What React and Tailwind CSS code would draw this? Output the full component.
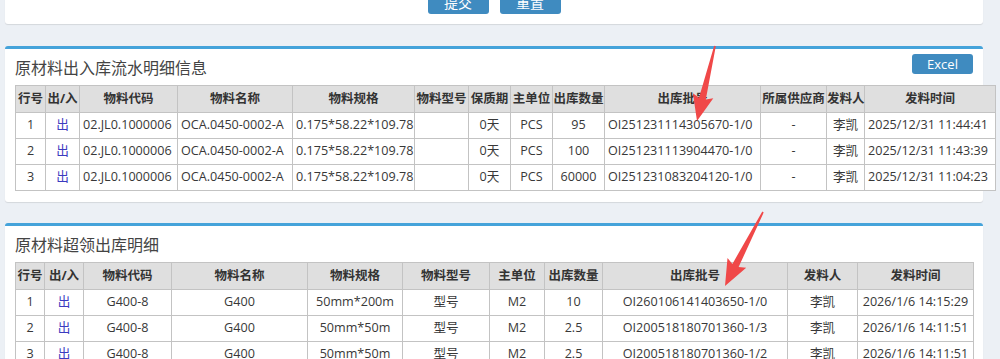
import React from "react";

const t1Cols = [
  { h: "行号", w: 30, a: "c" },
  { h: "出/入", w: 34, a: "c" },
  { h: "物料代码", w: 98, a: "l" },
  { h: "物料名称", w: 115, a: "l" },
  { h: "物料规格", w: 122, a: "l" },
  { h: "物料型号", w: 54, a: "c" },
  { h: "保质期", w: 42, a: "c" },
  { h: "主单位", w: 42, a: "c" },
  { h: "出库数量", w: 52, a: "c" },
  { h: "出库批号", w: 156, a: "l" },
  { h: "所属供应商", w: 66, a: "c" },
  { h: "发料人", w: 38, a: "c" },
  { h: "发料时间", w: 131, a: "l" },
];

const t1Rows = [
  ["1", "出", "02.JL0.1000006", "OCA.0450-0002-A", "0.175*58.22*109.78", "", "0天", "PCS", "95", "OI251231114305670-1/0", "-", "李凯", "2025/12/31 11:44:41"],
  ["2", "出", "02.JL0.1000006", "OCA.0450-0002-A", "0.175*58.22*109.78", "", "0天", "PCS", "100", "OI251231113904470-1/0", "-", "李凯", "2025/12/31 11:43:39"],
  ["3", "出", "02.JL0.1000006", "OCA.0450-0002-A", "0.175*58.22*109.78", "", "0天", "PCS", "60000", "OI251231083204120-1/0", "-", "李凯", "2025/12/31 11:04:23"],
];

const t2Cols = [
  { h: "行号", w: 29, a: "c" },
  { h: "出/入", w: 39, a: "c" },
  { h: "物料代码", w: 88, a: "c" },
  { h: "物料名称", w: 136, a: "c" },
  { h: "物料规格", w: 95, a: "c" },
  { h: "物料型号", w: 87, a: "c" },
  { h: "主单位", w: 55, a: "c" },
  { h: "出库数量", w: 58, a: "c" },
  { h: "出库批号", w: 185, a: "c" },
  { h: "发料人", w: 70, a: "c" },
  { h: "发料时间", w: 116, a: "c" },
];

const t2Rows = [
  ["1", "出", "G400-8", "G400", "50mm*200m", "型号", "M2", "10", "OI260106141403650-1/0", "李凯", "2026/1/6 14:15:29"],
  ["2", "出", "G400-8", "G400", "50mm*50m", "型号", "M2", "2.5", "OI200518180701360-1/3", "李凯", "2026/1/6 14:11:51"],
  ["3", "出", "G400-8", "G400", "50mm*50m", "型号", "M2", "2.5", "OI200518180701360-1/2", "李凯", "2026/1/6 14:11:51"],
];

function DataTable({ cols, rows, width }) {
  return (
    <table
      className="table-fixed border-collapse border border-[#c3c3c3] bg-white"
      style={{ width }}
    >
      <colgroup>
        {cols.map((c, i) => (
          <col key={i} style={{ width: c.w }} />
        ))}
      </colgroup>
      <thead>
        <tr className="h-[27px] bg-[#dfdfdf]">
          {cols.map((c, i) => (
            <th
              key={i}
              className="border border-[#c3c3c3] p-0 text-center text-[12.5px] font-bold text-[#333] whitespace-nowrap"
            >
              {c.h}
            </th>
          ))}
        </tr>
      </thead>
      <tbody>
        {rows.map((r, ri) => (
          <tr key={ri} className="h-[26px]">
            {r.map((v, ci) => (
              <td
                key={ci}
                className={
                  "border border-[#c3c3c3] py-0 text-[12.6px] whitespace-nowrap overflow-visible " +
                  (cols[ci].a === "l" ? "text-left pl-[3px] pr-0 " : "text-center px-0 ") +
                  (ci === 1 ? "text-[#3b3bbf]" : "text-[#383838]")
                }
              >
                {v}
              </td>
            ))}
          </tr>
        ))}
      </tbody>
    </table>
  );
}

function arrowPoints(sx, sy, tx, ty) {
  const dx = tx - sx;
  const dy = ty - sy;
  const L = Math.hypot(dx, dy);
  const ux = dx / L;
  const uy = dy / L;
  const nx = -uy;
  const ny = ux;
  const hl = 23;
  const hw = 10.5;
  const s0 = 0.8;
  const s1 = 3.5;
  const bx = tx - ux * hl;
  const by = ty - uy * hl;
  const wx = bx - ux * 3;
  const wy = by - uy * 3;
  const pts = [
    [sx + nx * s0, sy + ny * s0],
    [bx + nx * s1, by + ny * s1],
    [wx + nx * hw, wy + ny * hw],
    [tx, ty],
    [wx - nx * hw, wy - ny * hw],
    [bx - nx * s1, by - ny * s1],
    [sx - nx * s0, sy - ny * s0],
  ];
  return pts.map((p) => p[0].toFixed(1) + "," + p[1].toFixed(1)).join(" ");
}

export default function App() {
  return (
    <div className="relative w-[1000px] h-[359px] overflow-hidden bg-[#ecf0f5] font-['Open_Sans','Noto_Sans_CJK_SC',sans-serif]">
      <div className="pl-[5px] pr-[17px]">
        {/* top form panel (scrolled) */}
        <div className="-mt-[20px] h-[44px] bg-white rounded-b-[3px] shadow-[0_1px_1px_rgba(0,0,0,0.1)] flex items-end justify-center gap-[11px] pb-[10px]">
          <button className="w-[61px] h-[24px] rounded-[3px] bg-[#3f8bc0] text-white text-[14px] font-['Noto_Sans_CJK_SC',sans-serif] leading-none">
            提交
          </button>
          <button className="w-[61px] h-[24px] rounded-[3px] bg-[#3f8bc0] text-white text-[14px] font-['Noto_Sans_CJK_SC',sans-serif] leading-none">
            重置
          </button>
        </div>

        {/* panel 1 */}
        <div className="mt-[22px] bg-white border-t-[3px] border-[#45a3da] rounded-[3px] shadow-[0_1px_1px_rgba(0,0,0,0.1)] px-[10px] pb-[11px]">
          <div className="h-[36px] flex justify-between">
            <div className="self-center text-[16px] text-[#444] font-['Noto_Sans_CJK_SC',sans-serif] leading-none">
              原材料出入库流水明细信息
            </div>
            <button className="mt-[5px] w-[61px] h-[20px] rounded-[3px] bg-[#3f8bc0] text-white text-[13px] font-medium leading-none">
              Excel
            </button>
          </div>
          <DataTable cols={t1Cols} rows={t1Rows} width={980} />
        </div>

        {/* panel 2 */}
        <div className="mt-[21px] bg-white border-t-[3px] border-[#45a3da] rounded-[3px] shadow-[0_1px_1px_rgba(0,0,0,0.1)] px-[10px] pb-[11px]">
          <div className="h-[36px] flex items-center">
            <div className="text-[16px] text-[#444] font-['Noto_Sans_CJK_SC',sans-serif] leading-none">
              原材料超领出库明细
            </div>
          </div>
          <DataTable cols={t2Cols} rows={t2Rows} width={958} />
        </div>
      </div>

      {/* annotation arrows */}
      <svg
        className="absolute left-0 top-0 pointer-events-none"
        width="1000"
        height="359"
        viewBox="0 0 1000 359"
      >
        <polygon points={arrowPoints(715, 46, 697, 121)} fill="#f04848" />
        <polygon points={arrowPoints(763, 212, 725, 286)} fill="#f04848" />
      </svg>
    </div>
  );
}
